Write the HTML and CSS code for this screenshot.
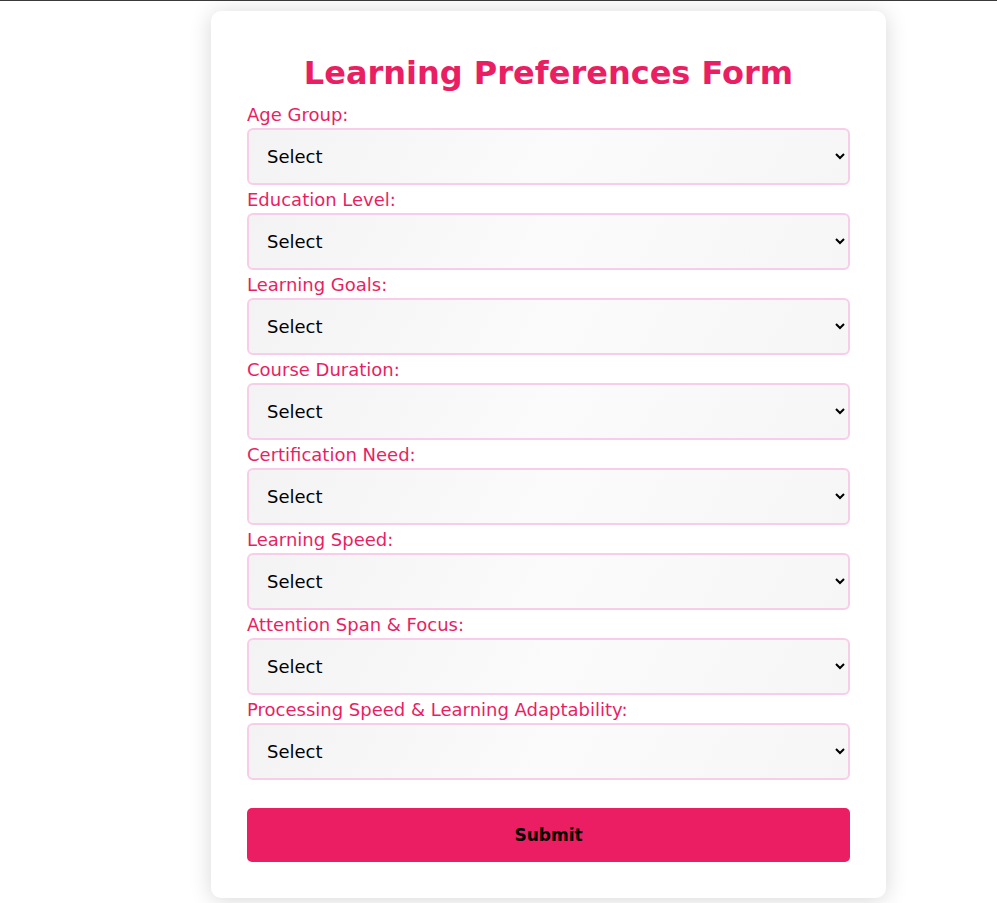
FILE: index.html
```html
<!DOCTYPE html>
<html>
<head>
<meta charset="utf-8">
<link rel="stylesheet" href="styles.css">
</head>
<body>
<div class="topline"></div>
<div class="page">
  <form class="card">
    <h2 class="title">Learning Preferences Form</h2>
    <label class="label">Age Group:</label>
    <select class="field"><option>Select</option></select>
    <label class="label">Education Level:</label>
    <select class="field"><option>Select</option></select>
    <label class="label">Learning Goals:</label>
    <select class="field"><option>Select</option></select>
    <label class="label">Course Duration:</label>
    <select class="field"><option>Select</option></select>
    <label class="label">Certification Need:</label>
    <select class="field"><option>Select</option></select>
    <label class="label">Learning Speed:</label>
    <select class="field"><option>Select</option></select>
    <label class="label">Attention Span &amp; Focus:</label>
    <select class="field"><option>Select</option></select>
    <label class="label">Processing Speed &amp; Learning Adaptability:</label>
    <select class="field"><option>Select</option></select>
    <button type="button" class="submit">Submit</button>
  </form>
</div>
</body>
</html>
```
FILE: styles.css
```css
html, body {
  margin: 0;
  padding: 0;
  background: #ffffff;
  font-family: "DejaVu Sans", sans-serif;
}
.topline {
  height: 1px;
  background: #3a3a3a;
}
.page {
  display: flex;
  padding: 10px 0 6px 211px;
}
.card {
  width: 675px;
  box-sizing: border-box;
  padding: 36px;
  background: #ffffff;
  border-radius: 10px;
  box-shadow: 0 2px 22px rgba(0, 0, 0, 0.16);
  display: flex;
  flex-direction: column;
}
.title {
  margin: 0;
  text-align: center;
  color: #e91e63;
  font-size: 32px;
  font-weight: 700;
  line-height: 53px;
}
.label {
  display: block;
  color: #e91e63;
  font-size: 18px;
  line-height: 24px;
  margin-top: 3px;
  margin-bottom: 1px;
}
.field {
  width: 100%;
  height: 57px;
  box-sizing: border-box;
  border: 2px solid #f8cdea;
  border-radius: 6px;
  padding: 0 14px;
  font-family: "DejaVu Sans", sans-serif;
  font-size: 18px;
  color: #000;
  background: linear-gradient(120deg, #f3f3f3, #fbfbfb 50%, #f6f6f6);
}
.submit {
  margin-top: 28px;
  height: 54px;
  width: 100%;
  border: none;
  border-radius: 5px;
  background: #eb1e63;
  color: #000;
  font-family: "DejaVu Sans", sans-serif;
  font-size: 17px;
  font-weight: 700;
}
```
